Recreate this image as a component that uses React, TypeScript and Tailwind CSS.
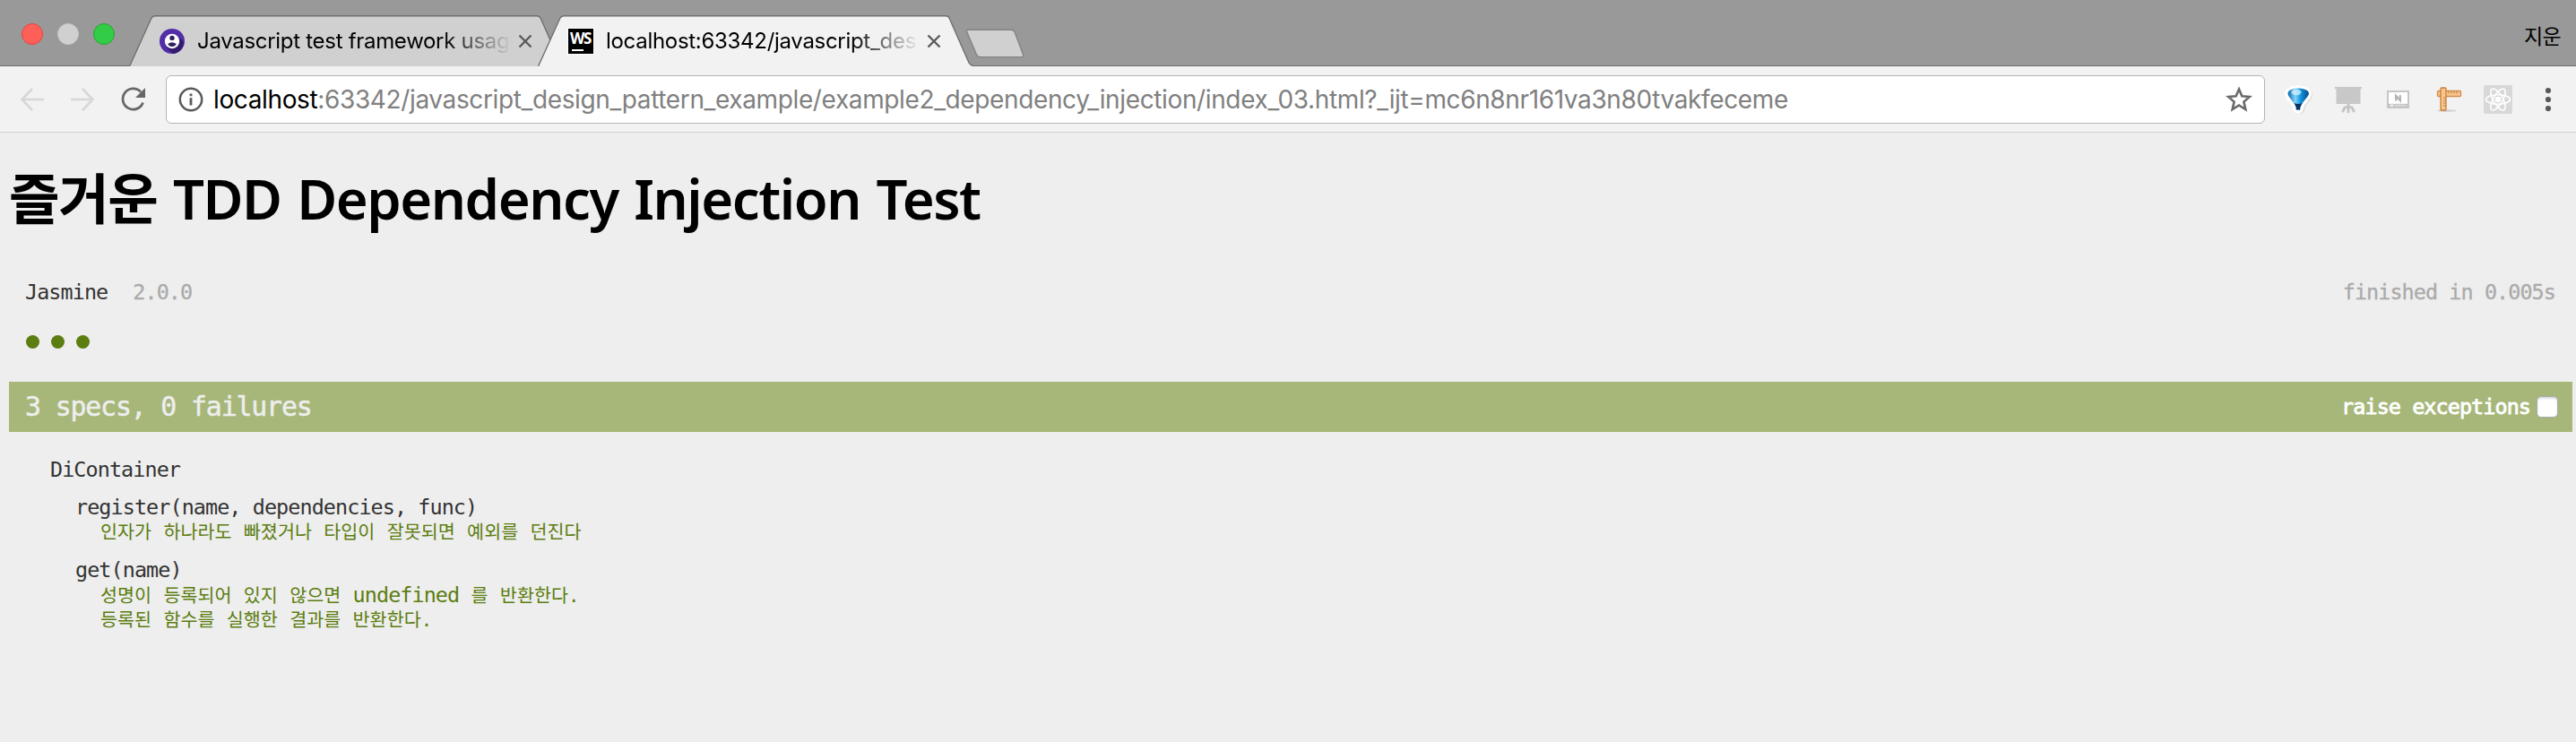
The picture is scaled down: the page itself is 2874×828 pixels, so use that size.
import type { ReactNode } from "react";

const mono = "font-['DejaVu_Sans_Mono','Noto_Sans_CJK_KR',monospace]";

function Tab({ fill, title, icon, className }: { fill: string; title: string; icon: ReactNode; className: string }) {
  return (
    <div className={`relative h-[57px] w-[486px] shrink-0 ${className}`}>
      <svg className="absolute inset-0" width="486" height="57" viewBox="0 0 486 57">
        <path d="M0.5 57 L25 3 Q26.5 0.7 29 0.7 H455 Q458 0.7 459 3 L481 53 Q483 56.5 486 56.5 V57 Z" fill={fill} />
        <path d="M0.5 57 L25 3 Q26.5 0.7 29 0.7 H455 Q458 0.7 459 3 L481 53 Q483 56.3 486 56.3" fill="none" stroke="#6f6f6f" strokeWidth="1.4" />
      </svg>
      <div className="relative flex h-[57px] items-center pl-[34px]">
        {icon}
        <div className="ml-[14px] w-[351px] whitespace-nowrap bg-[linear-gradient(90deg,#000_78%,transparent_100%)] bg-clip-text text-transparent text-[24px] tracking-[-0.3px] leading-[36px]">
          {title}
        </div>
        <svg className="ml-[7px] shrink-0" width="16" height="16" viewBox="0 0 16 16">
          <path d="M1.5 1.5 L14.5 14.5 M14.5 1.5 L1.5 14.5" stroke="#5a5a5a" strokeWidth="2.4" />
        </svg>
      </div>
    </div>
  );
}

function MochaIcon() {
  return (
    <svg className="shrink-0" width="28" height="28" viewBox="0 0 28 28">
      <circle cx="14" cy="14" r="14" fill="#512da8" />
      <path d="M20 8 L27 15 A14 14 0 0 1 15 28 L8 21 Z" fill="#311b6b" />
      <circle cx="14" cy="14" r="8.2" fill="#fff" />
      <circle cx="14" cy="10.4" r="2.7" fill="#2f2060" />
      <path d="M9.2 17 Q14 13.6 18.8 17 Q17.5 20 14 20 Q10.5 20 9.2 17 Z" fill="#2f2060" />
    </svg>
  );
}

function WebStormIcon() {
  return (
    <div className="flex h-[28px] w-[28px] shrink-0 flex-col bg-black outline-1 outline-white">
      <span className="pl-[2px] pt-[2px] font-['Open_Sans',sans-serif] text-[17px] font-bold leading-[17px] tracking-[-1.5px] text-white">WS</span>
      <span className="ml-[4px] mt-[4px] h-[2px] w-[13px] bg-white" />
    </div>
  );
}

function TitleBar() {
  return (
    <header className="flex h-[74px] items-end border-b border-[#6e6e6e] bg-[#999]">
      <div className="mb-[23px] ml-[24px] flex gap-[16px]">
        <span className="h-[24px] w-[24px] rounded-full border border-[#e2463f] bg-[#fe5f57]" />
        <span className="h-[24px] w-[24px] rounded-full border border-[#c6c6c6] bg-[#d0d0d0]" />
        <span className="h-[24px] w-[24px] rounded-full border border-[#25a734] bg-[#33cc46]" />
      </div>
      <Tab className="ml-[16px] -mb-px" fill="#d0d0d0" title="Javascript test framework usag" icon={<MochaIcon />} />
      <Tab className="-ml-[30px] -mb-px" fill="#f2f2f2" title="localhost:63342/javascript_des" icon={<WebStormIcon />} />
      <svg className="-ml-[9px] mb-[7px]" width="66" height="34" viewBox="0 0 66 34">
        <path d="M3.5 1.2 H51 Q54 1.2 55 3.5 L64.5 29 Q65.5 31.6 63 31.6 H16 Q13.5 31.6 12.5 29 L1.6 3.2 Q1 1.2 3.5 1.2 Z" fill="#d0d0d0" stroke="#848484" strokeWidth="1.4" />
      </svg>
      <span className="mb-[17px] ml-auto mr-[17px] font-['Noto_Sans_CJK_KR',sans-serif] text-[23px] leading-[34px] tracking-[-0.6px] text-black">지운</span>
    </header>
  );
}

function Extensions() {
  return (
    <div className="ml-[21px] flex items-center">
      <svg width="32" height="34" viewBox="0 0 32 34">
        <defs>
          <linearGradient id="balloon" x1="0" x2="1" y1="0" y2="0">
            <stop offset="0" stopColor="#0a62a8" />
            <stop offset="0.35" stopColor="#7fd3fa" />
            <stop offset="0.6" stopColor="#1497e0" />
            <stop offset="1" stopColor="#044a86" />
          </linearGradient>
        </defs>
        <path d="M17 3 C26 3 32 6 32 12 C31 19 24 21 23 29 Q22 33 18 33 Z" fill="#dcdcdc" />
        <path d="M16 1.5 C25 1.5 31 5 31 10.5 C30.5 18 23 20 21.5 28 Q21 32.5 16 32.5 Q11 32.5 10.5 28 C9 20 1.5 18 1 10.5 C1 5 7 1.5 16 1.5 Z" fill="#fff" />
        <path d="M16 4.5 C23 4.5 28 7 28 10.5 C27 15 20 20 18.2 26 V28.5 H13.8 V26 C12 20 5 15 4.5 10.5 C4.5 7 9 4.5 16 4.5 Z" fill="url(#balloon)" />
        <path d="M11.6 21 Q16 23 20.6 21 L18.2 26 V28.5 H13.8 V26 Z" fill="#06345f" />
        <ellipse cx="14" cy="9" rx="5.5" ry="3.2" fill="#d4f1ff" opacity="0.75" />
      </svg>
      <svg className="ml-[24px]" width="32" height="32" viewBox="0 0 32 32">
        <path d="M1 2 H31 V4.2 H29.5 V21 H2.5 V4.2 H1 Z" fill="#c8c8c8" />
        <path d="M16 21 V31 M16 24 L12 25 L9.5 30 M16 24 L20 25 L22.5 30" stroke="#c4c4c4" strokeWidth="2.8" fill="none" />
      </svg>
      <svg className="ml-[27px]" width="25" height="20" viewBox="0 0 25 20">
        <rect x="1" y="1" width="23" height="18" fill="#fff" stroke="#c6c6c6" strokeWidth="2" />
        <path d="M1 14.8 H24 V19 H1 Z" fill="#c6c6c6" />
        <rect x="4" y="15.8" width="3" height="1.8" fill="#fff" />
        <rect x="8.5" y="16.3" width="13" height="0.9" fill="#e8e8e8" />
        <path d="M10.2 11.5 V6 L14.8 11 V5.2" stroke="#b4b4b4" strokeWidth="2.4" fill="none" />
      </svg>
      <svg className="ml-[30px]" width="30" height="30" viewBox="0 0 30 30">
        <ellipse cx="12" cy="27.5" rx="11" ry="1.5" fill="#d4d4d4" />
        <rect x="1.5" y="5.5" width="26" height="6" rx="1" fill="#f6c890" stroke="#d78a48" strokeWidth="1.3" />
        <rect x="5" y="2" width="6" height="25" rx="1" fill="#f6c890" stroke="#cc7c38" strokeWidth="1.3" />
        <path d="M14 6 V8.5 M17 6 V8.5 M20 6 V8.5 M23 6 V8.5 M8 13 H10.5 M8 16 H10.5 M8 19 H10.5 M8 22 H10.5" stroke="#c27534" strokeWidth="0.9" />
      </svg>
      <svg className="ml-[23px]" width="32" height="32" viewBox="0 0 32 32">
        <rect width="32" height="32" rx="2" fill="#d8d8d8" />
        <g fill="none" stroke="#fff" strokeWidth="1.6">
          <ellipse cx="16" cy="16" rx="13.5" ry="5.2" />
          <ellipse cx="16" cy="16" rx="13.5" ry="5.2" transform="rotate(60 16 16)" />
          <ellipse cx="16" cy="16" rx="13.5" ry="5.2" transform="rotate(120 16 16)" />
        </g>
        <circle cx="16" cy="16" r="3.2" fill="#fff" />
      </svg>
      <svg className="ml-[36px]" width="8" height="28" viewBox="0 0 8 28" fill="#5a5a5a">
        <circle cx="4" cy="4" r="3.1" />
        <circle cx="4" cy="14" r="3.1" />
        <circle cx="4" cy="24" r="3.1" />
      </svg>
    </div>
  );
}

function Toolbar() {
  return (
    <div className="flex h-[74px] items-center border-b border-[#d0d0d0] bg-[#f2f2f2]">
      <svg className="ml-[22px]" width="28" height="28" viewBox="0 0 28 28">
        <path d="M27 14 H3 M14 2 L2.5 14 L14 26" fill="none" stroke="#d7d7d7" strokeWidth="2.6" />
      </svg>
      <svg className="ml-[28px]" width="28" height="28" viewBox="0 0 28 28">
        <path d="M1 14 H25 M14 2 L25.5 14 L14 26" fill="none" stroke="#d7d7d7" strokeWidth="2.6" />
      </svg>
      <svg className="ml-[28px]" width="30" height="28" viewBox="0 0 30 28">
        <path d="M23 5.5 A11.6 11.6 0 1 0 25.5 17.5" fill="none" stroke="#666" strokeWidth="2.7" />
        <path d="M28 1 V12 H17 Z" fill="#666" />
      </svg>
      <div className="ml-[21px] flex h-[54px] w-[2342px] items-center rounded-[6px] border border-[#b4b4b4] bg-white">
        <svg className="ml-[13px] shrink-0" width="28" height="28" viewBox="0 0 28 28">
          <circle cx="14" cy="14" r="12.2" fill="none" stroke="#5a5a5a" strokeWidth="2.5" />
          <path d="M14 12.2 V20.5 M14 7.5 V10.2" stroke="#5a5a5a" strokeWidth="2.8" />
        </svg>
        <span className="ml-[11px] whitespace-nowrap text-[28px] leading-[40px] tracking-[-0.37px] text-[#808080]">
          <span className="text-black">localhost</span>:63342/javascript_design_pattern_example/example2_dependency_injection/index_03.html?_ijt=mc6n8nr161va3n80tvakfeceme
        </span>
        <svg className="ml-auto mr-[13px]" width="30" height="30" viewBox="0 0 30 30">
          <path d="M15 3.5 L18.3 11.3 L26.8 12 L20.4 17.6 L22.3 26 L15 21.5 L7.7 26 L9.6 17.6 L3.2 12 L11.7 11.3 Z" fill="none" stroke="#6a6a6a" strokeWidth="2.6" />
        </svg>
      </div>
      <Extensions />
    </div>
  );
}

function Spec({ children }: { children: ReactNode }) {
  return (
    <li className="h-[28px] whitespace-pre text-[20.65px] leading-[28px] tracking-[0.05px] text-[#5c7d10] [word-spacing:0.8px]">
      {children}
    </li>
  );
}

function Suite({ name, children }: { name: string; children: ReactNode }) {
  return (
    <section className="mt-[14px] pl-[28px]">
      <h3>{name}</h3>
      <ul className="pl-[28px]">{children}</ul>
    </section>
  );
}

export default function App() {
  return (
    <div className="flex h-[828px] w-[2874px] flex-col overflow-hidden bg-[#eee] font-[Inter,'Noto_Sans_CJK_KR',sans-serif]">
      <TitleBar />
      <Toolbar />
      <main className="flex flex-col pl-[10px] pr-[4px]">
        <h1 className="mt-[31px] h-[84px] whitespace-nowrap font-['Noto_Sans','Noto_Sans_CJK_KR',sans-serif] text-[61.5px] font-semibold leading-[84px] tracking-[-1.45px] text-black [word-spacing:3px]">
          즐거운 TDD Dependency Injection Test
        </h1>
        <div className={`mt-[49px] text-[23.4px] leading-[28px] tracking-[-0.9px] text-[#333] ${mono}`}>
          <div className="flex pl-[18px] pr-[19px]">
            <span>Jasmine</span>
            <span className="ml-[28px] text-[#aaa] [-webkit-text-stroke:0.3px_#aaa]">2.0.0</span>
            <span className="ml-auto text-[#aaa] [-webkit-text-stroke:0.3px_#aaa]">finished in 0.005s</span>
          </div>
          <div className="mt-[34px] flex gap-[13px] pl-[19px]">
            <span className="h-[15px] w-[15px] rounded-full bg-[#5c7d10]" />
            <span className="h-[15px] w-[15px] rounded-full bg-[#5c7d10]" />
            <span className="h-[15px] w-[15px] rounded-full bg-[#5c7d10]" />
          </div>
          <div className="mt-[37px] flex h-[56px] items-center bg-[#a6b779] pl-[18px] pr-[16px]">
            <span className="text-[29.8px] tracking-[-1.12px] text-[#eee] [-webkit-text-stroke:0.5px_#eee]">3 specs, 0 failures</span>
            <span className="ml-auto text-white [-webkit-text-stroke:0.8px_#fff]">raise exceptions</span>
            <span className="ml-[7px] h-[24px] w-[24px] rounded-[5px] border border-[#a9a9b5] bg-white shadow-[inset_0_2px_2px_#ddd]" />
          </div>
          <div className="mt-[28px] pl-[46px]">
            <h2>DiContainer</h2>
            <Suite name="register(name, dependencies, func)">
              <Spec>인자가 하나라도 빠졌거나 타입이 잘못되면 예외를 던진다</Spec>
            </Suite>
            <Suite name="get(name)">
              <Spec>
                성명이 등록되어 있지 않으면 <span className="text-[23.4px] tracking-[-0.9px]">undefined</span> 를 반환한다.
              </Spec>
              <Spec>등록된 함수를 실행한 결과를 반환한다.</Spec>
            </Suite>
          </div>
        </div>
      </main>
    </div>
  );
}
